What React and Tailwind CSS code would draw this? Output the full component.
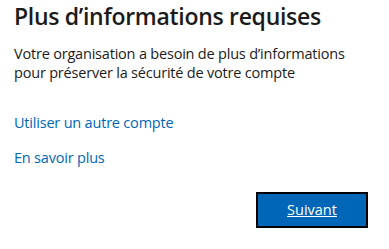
export default function App() {
  return (
    <div className="w-[389px] h-[249px] bg-white text-[#1b1b1b] pl-[14px] pr-[21px]" style={{ fontFamily: '"Open Sans", "Noto Sans", sans-serif' }}>
      <h1 className="text-[23px] font-semibold leading-[30px] pt-[1px] tracking-[-0.3px]">Plus d’informations requises</h1>
      <p className="mt-[13px] max-w-[340px] text-[14.5px] leading-[19px] tracking-[-0.2px]">
        Votre organisation a besoin de plus d’informations pour préserver la sécurité de votre compte
      </p>
      <div className="mt-[31px] flex flex-col gap-[15px] text-[14.5px] leading-[20px] text-[#0067b8] tracking-[-0.2px]">
        <a href="#" className="w-fit">Utiliser un autre compte</a>
        <a href="#" className="w-fit">En savoir plus</a>
      </div>
      <div className="mt-[24px] flex justify-end">
        <button className="w-[112px] h-[36px] bg-[#0067b8] border-2 border-black text-white text-[14.5px] underline">Suivant</button>
      </div>
    </div>
  );
}
